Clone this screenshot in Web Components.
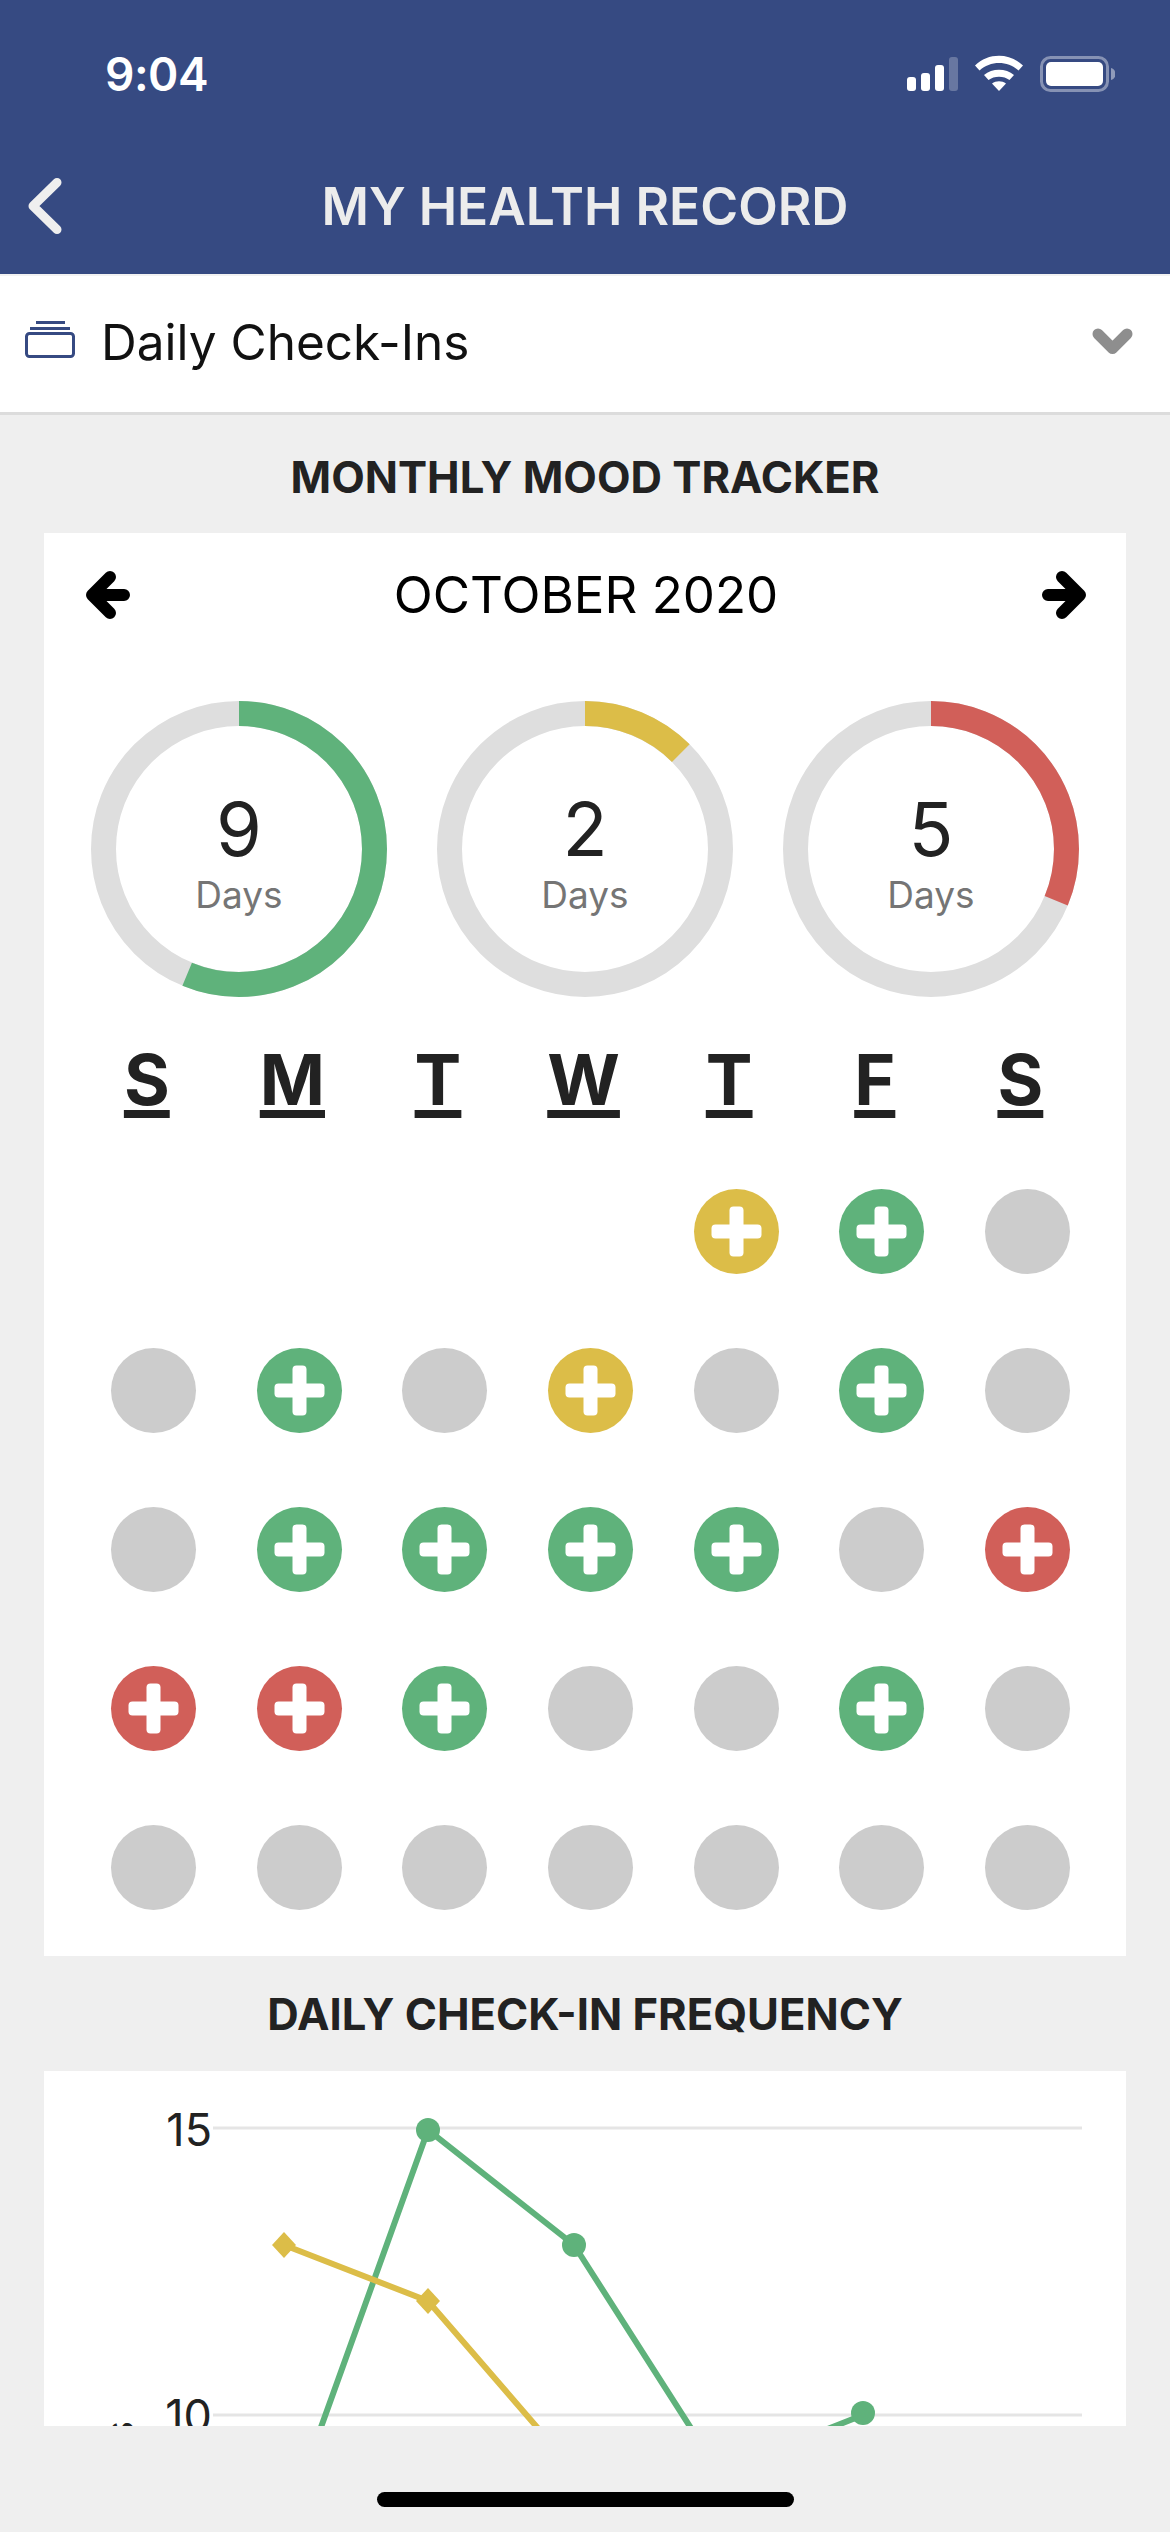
<!DOCTYPE html>
<html lang="en">
<head>
<meta charset="utf-8">
<title>My Health Record</title>
<style>
  html, body { margin: 0; height: 2532px; overflow: hidden; background: #efefef; }
  body { font-family: Inter, "Liberation Sans", sans-serif; color: #222; display: flex; flex-direction: column; }
</style>
</head>
<body>
<health-header title-text="MY HEALTH RECORD"></health-header>
<record-select>Daily Check-Ins</record-select>
<section-title style="height:118px;padding-top:6px">MONTHLY MOOD TRACKER</section-title>
<mood-calendar month="OCTOBER 2020">
  <mood-ring slot="rings" days="9" mood="good"></mood-ring>
  <mood-ring slot="rings" days="2" mood="okay"></mood-ring>
  <mood-ring slot="rings" days="5" mood="bad"></mood-ring>
</mood-calendar>
<section-title style="height:115px;padding-top:2px">DAILY CHECK-IN FREQUENCY</section-title>
<frequency-chart></frequency-chart>
<home-indicator></home-indicator>

<script>
const moodColors = { good: "#5fb27b", okay: "#dcbd48", bad: "#d15f59" };

class HealthHeader extends HTMLElement {
  connectedCallback() {
    this.attachShadow({ mode: "open" });
    this.shadowRoot.innerHTML = `
    <style>
      :host { display: block; background: #364a82; height: 274px; border-bottom: 2px solid #f2f2f2; }
      .status { display: flex; align-items: center; height: 148px; box-sizing: border-box; padding: 0 55px 0 105px; }
      .time { flex: 1; font-size: 46px; font-weight: 600; color: #fff; letter-spacing: -0.5px; }
      .status svg { display: block; }
      .nav { display: flex; align-items: center; justify-content: center; position: relative; height: 126px; padding-bottom: 10px; box-sizing: border-box; }
      .back { position: absolute; left: 24px; }
      h1 { margin: 0; font-size: 51.500px; font-weight: 600; color: #ececec; }
    </style>
    <div class="status">
      <div class="time">9:04</div>
      <svg width="210" height="40" viewBox="905 54 210 40" fill="#fff">
        <rect x="907" y="77" width="9" height="14" rx="3"/>
        <rect x="921" y="73" width="9" height="18" rx="3"/>
        <rect x="935" y="65" width="9" height="26" rx="3"/>
        <rect x="949" y="57" width="9" height="34" rx="3" opacity=".25"/>
        <path d="M975 65.5C988 52.500 1010 52.500 1023 65.500L1018.500 70.500C1008 60.500 990 60.500 979.500 70.500Z"/>
        <path d="M984 75C992 68 1006 68 1014 75L1009.500 80C1004 75.500 994 75.500 988.500 80Z"/>
        <path d="M992 83.500C996 80.500 1002 80.500 1006 83.500L999 91Z"/>
        <rect x="1041.500" y="57.500" width="66" height="33" rx="9" fill="none" stroke="#fff" stroke-width="3" opacity=".4"/>
        <rect x="1046" y="62" width="57" height="24" rx="5"/>
        <path d="M1111 68c3 1 4.500 3 4.500 6s-1.500 5-4.500 6z" opacity=".45"/>
      </svg>
    </div>
    <div class="nav">
      <svg class="back" width="44" height="64" viewBox="24 173.500 44 64" fill="none" stroke="#efefef" stroke-width="9" stroke-linecap="round" stroke-linejoin="round">
        <path d="M57 182L33 205.500L57 229"/>
      </svg>
      <h1>${this.getAttribute("title-text")}</h1>
    </div>`;
  }
}
customElements.define("health-header", HealthHeader);

class RecordSelect extends HTMLElement {
  connectedCallback() {
    this.attachShadow({ mode: "open" });
    this.shadowRoot.innerHTML = `
    <style>
      :host { display: flex; align-items: center; height: 136px; background: #fff; border-bottom: 3px solid #dcdcdc; padding: 0 36px 0 25px; font-size: 49.500px; color: #111; }
      svg { display: block; }
      .stack { margin-bottom: 10px; }
      .label { flex: 1; margin-left: 25px; margin-bottom: 4px; }
      .chev { margin-bottom: 5px; }
    </style>
    <svg class="stack" width="51" height="38" viewBox="25 320 51 38" fill="none" stroke="#364a82" stroke-width="3">
      <path d="M36 322.500H65M30 328.500H70"/>
      <rect x="26.500" y="333.500" width="47" height="23" rx="3"/>
    </svg>
    <div class="label"><slot></slot></div>
    <svg class="chev" width="42" height="30" viewBox="1093 326 42 30" fill="none" stroke="#8e8e8e" stroke-width="11" stroke-linecap="round" stroke-linejoin="round">
      <path d="M1099 333L1113.500 347.500L1128 333"/>
    </svg>`;
  }
}
customElements.define("record-select", RecordSelect);

class SectionTitle extends HTMLElement {
  connectedCallback() {
    this.attachShadow({ mode: "open" });
    this.shadowRoot.innerHTML = `
    <style>
      :host { display: flex; align-items: center; justify-content: center; box-sizing: border-box; font-size: 43.600px; font-weight: 700; color: #222; }
    </style>
    <slot></slot>`;
  }
}
customElements.define("section-title", SectionTitle);

class MoodRing extends HTMLElement {
  connectedCallback() {
    const days = this.getAttribute("days");
    const color = moodColors[this.getAttribute("mood")];
    this.attachShadow({ mode: "open" });
    this.shadowRoot.innerHTML = `
    <style>
      :host { display: grid; width: 296px; height: 296px; }
      svg, .text { grid-area: 1 / 1; }
      svg { display: block; }
      .text { display: flex; flex-direction: column; align-items: center; justify-content: center; padding-top: 12px; }
      .num { font-size: 74px; line-height: 80px; color: #222; }
      .unit { font-size: 37px; line-height: 52px; color: #757575; }
    </style>
    <svg width="296" height="296" viewBox="0 0 296 296" fill="none" stroke-width="25">
      <circle cx="148" cy="148" r="135.500" stroke="#dedede"/>
      <circle cx="148" cy="148" r="135.500" stroke="${color}" pathLength="16" stroke-dasharray="${days} 16" transform="rotate(-90 148 148)"/>
    </svg>
    <div class="text"><div class="num">${days}</div><div class="unit">Days</div></div>`;
  }
}
customElements.define("mood-ring", MoodRing);

class DayDot extends HTMLElement {
  connectedCallback() {
    const mood = this.getAttribute("mood");
    this.attachShadow({ mode: "open" });
    const plus = mood ? `<svg width="85" height="85" viewBox="0 0 85 85" fill="#fff">
        <rect x="35.500" y="17.500" width="14" height="50" rx="4"/>
        <rect x="17.500" y="35.500" width="50" height="14" rx="4"/>
      </svg>` : "";
    this.shadowRoot.innerHTML = `
    <style>
      :host { display: block; width: 85px; height: 85px; border-radius: 50%; background: ${moodColors[mood] || "#cccccc"}; }
      svg { display: block; }
    </style>
    ${plus}`;
  }
}
customElements.define("day-dot", DayDot);

class MoodCalendar extends HTMLElement {
  connectedCallback() {
    const weeks = [
      "____ygn",
      "ngnyngn",
      "nggggnr",
      "rrgnngn",
      "nnnnnnn"
    ];
    const names = { g: "good", y: "okay", r: "bad" };
    const cells = weeks.join("").split("").map(c => {
      if (c === "_") return `<div class="cell"></div>`;
      const attr = names[c] ? ` mood="${names[c]}"` : "";
      return `<div class="cell"><day-dot${attr}></day-dot></div>`;
    }).join("");
    const heads = "SMTWTFS".split("").map(d => `<span>${d}</span>`).join("");
    this.attachShadow({ mode: "open" });
    this.shadowRoot.innerHTML = `
    <style>
      :host { display: block; background: #fff; margin: 0 44px; height: 1423px; }
      .month { display: flex; align-items: center; justify-content: space-between; height: 122px; padding: 0 40px 2px 42px; font-size: 51px; color: #000; }
      .month svg { display: block; margin-top: 2px; }
      .rings { display: flex; gap: 50px; padding: 44px 0 0 47px; }
      .week { display: grid; grid-template-columns: repeat(7, 145.6px); padding-left: 30px; height: 155px; box-sizing: border-box; padding-top: 38px; text-align: center; font-size: 70px; font-weight: 700; line-height: 90px; color: #222; }
      .week span { text-decoration: underline; text-decoration-thickness: 8px; text-underline-offset: 5px; }
      .days { display: grid; grid-template-columns: repeat(7, 145.6px); grid-auto-rows: 159px; padding-left: 37px; }
      .cell { display: flex; align-items: center; justify-content: center; }
    </style>
    <div class="month">
      <svg width="46" height="48" viewBox="0 0 46 48" fill="none" stroke="#000" stroke-width="12" stroke-linecap="round" stroke-linejoin="round"><path d="M24 6L6 24L24 42M6 24H38"/></svg>
      <span>${this.getAttribute("month")}</span>
      <svg width="46" height="48" viewBox="0 0 46 48" fill="none" stroke="#000" stroke-width="12" stroke-linecap="round" stroke-linejoin="round"><path d="M22 6L40 24L22 42M40 24H8"/></svg>
    </div>
    <div class="rings"><slot name="rings"></slot></div>
    <div class="week">${heads}</div>
    <div class="days">${cells}</div>`;
  }
}
customElements.define("mood-calendar", MoodCalendar);

class FrequencyChart extends HTMLElement {
  connectedCallback() {
    this.attachShadow({ mode: "open" });
    this.shadowRoot.innerHTML = `
    <style>
      :host { display: block; background: #fff; margin: 0 44px; height: 355px; overflow: hidden; }
      svg { display: block; }
      text { font-family: Inter, "Liberation Sans", sans-serif; fill: #222; }
    </style>
    <svg width="1082" height="355" viewBox="44 2071 1082 355" fill="none">
      <path d="M213 2128H1082M213 2415H1082" stroke="#e5e5e5" stroke-width="3"/>
      <text x="212" y="2146" font-size="45" text-anchor="end">15</text>
      <text x="212" y="2432" font-size="45" text-anchor="end">10</text>
      <text transform="translate(134 2520) rotate(-90)" font-size="42">Days</text>
      <polyline points="284,2530 428,2130 574,2245 719,2472 863,2415" stroke="#5fb27b" stroke-width="6"/>
      <circle cx="428" cy="2130" r="12" fill="#5fb27b"/>
      <circle cx="574" cy="2245" r="12" fill="#5fb27b"/>
      <circle cx="863" cy="2413" r="12" fill="#5fb27b"/>
      <polyline points="284,2245 428,2301 574,2470" stroke="#dcbd48" stroke-width="6"/>
      <path d="M284 2232L296 2245L284 2258L272 2245Z" fill="#dcbd48"/>
      <path d="M428 2288L440 2301L428 2314L416 2301Z" fill="#dcbd48"/>
    </svg>`;
  }
}
customElements.define("frequency-chart", FrequencyChart);

class HomeIndicator extends HTMLElement {
  connectedCallback() {
    this.attachShadow({ mode: "open" });
    this.shadowRoot.innerHTML = `
    <style>
      :host { display: flex; justify-content: center; padding-top: 66px; }
      div { width: 417px; height: 15px; border-radius: 8px; background: #000; }
    </style>
    <div></div>`;
  }
}
customElements.define("home-indicator", HomeIndicator);
</script>
</body>
</html>
